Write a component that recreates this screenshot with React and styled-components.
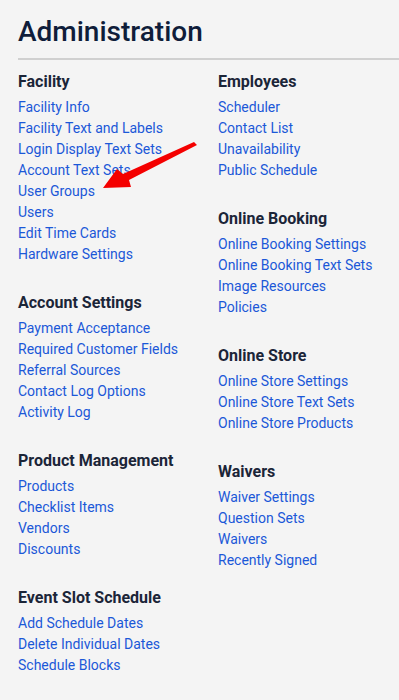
import styled, { createGlobalStyle } from "styled-components";

const GlobalStyle = createGlobalStyle`
  html, body {
    margin: 0;
    padding: 0;
    background: #f4f4f4;
  }
  body {
    font-family: Roboto, "Liberation Sans", sans-serif;
  }
`;

const Page = styled.div`
  position: relative;
  padding: 15px 0 0 18px;
  min-height: 700px;
  box-sizing: border-box;
  overflow: hidden;
`;

const Title = styled.h1`
  margin: 0;
  padding-bottom: 10px;
  font-size: 28px;
  line-height: 33px;
  font-weight: 500;
  color: #0f1d3a;
  border-bottom: 2px solid #d0d0d0;
`;

const Columns = styled.div`
  display: grid;
  grid-template-columns: 200px 1fr;
  padding-top: 11px;
`;

const Column = styled.div`
  display: flex;
  flex-direction: column;
  gap: 27px;
`;

const Section = styled.section`
  display: flex;
  flex-direction: column;
`;

const Heading = styled.h2`
  margin: 0 0 5px;
  font-size: 16px;
  line-height: 21px;
  font-weight: 700;
  color: #1b2538;
`;

const Link = styled.a`
  font-size: 14px;
  line-height: 21px;
  color: #1b58d8;
  text-decoration: none;
  white-space: nowrap;
`;

const Arrow = styled.svg`
  position: absolute;
  left: 0;
  top: 0;
  pointer-events: none;
`;

const left = [
  ["Facility", ["Facility Info", "Facility Text and Labels", "Login Display Text Sets", "Account Text Sets", "User Groups", "Users", "Edit Time Cards", "Hardware Settings"]],
  ["Account Settings", ["Payment Acceptance", "Required Customer Fields", "Referral Sources", "Contact Log Options", "Activity Log"]],
  ["Product Management", ["Products", "Checklist Items", "Vendors", "Discounts"]],
  ["Event Slot Schedule", ["Add Schedule Dates", "Delete Individual Dates", "Schedule Blocks"]],
];

const right = [
  ["Employees", ["Scheduler", "Contact List", "Unavailability", "Public Schedule"]],
  ["Online Booking", ["Online Booking Settings", "Online Booking Text Sets", "Image Resources", "Policies"]],
  ["Online Store", ["Online Store Settings", "Online Store Text Sets", "Online Store Products"]],
  ["Waivers", ["Waiver Settings", "Question Sets", "Waivers", "Recently Signed"]],
];

const renderColumn = (sections) => (
  <Column>
    {sections.map(([title, links]) => (
      <Section key={title}>
        <Heading>{title}</Heading>
        {links.map((l) => (
          <Link key={l} href="#">
            {l}
          </Link>
        ))}
      </Section>
    ))}
  </Column>
);

export default function App() {
  return (
    <>
      <GlobalStyle />
      <Page>
        <Title>Administration</Title>
        <Columns>
          {renderColumn(left)}
          {renderColumn(right)}
        </Columns>
        <Arrow width="399" height="700" viewBox="0 0 399 700">
          <polygon
            points="194,142 197,145 129,180 131,187 103,188 117,169 123,174"
            fill="#f40000"
          />
        </Arrow>
      </Page>
    </>
  );
}
